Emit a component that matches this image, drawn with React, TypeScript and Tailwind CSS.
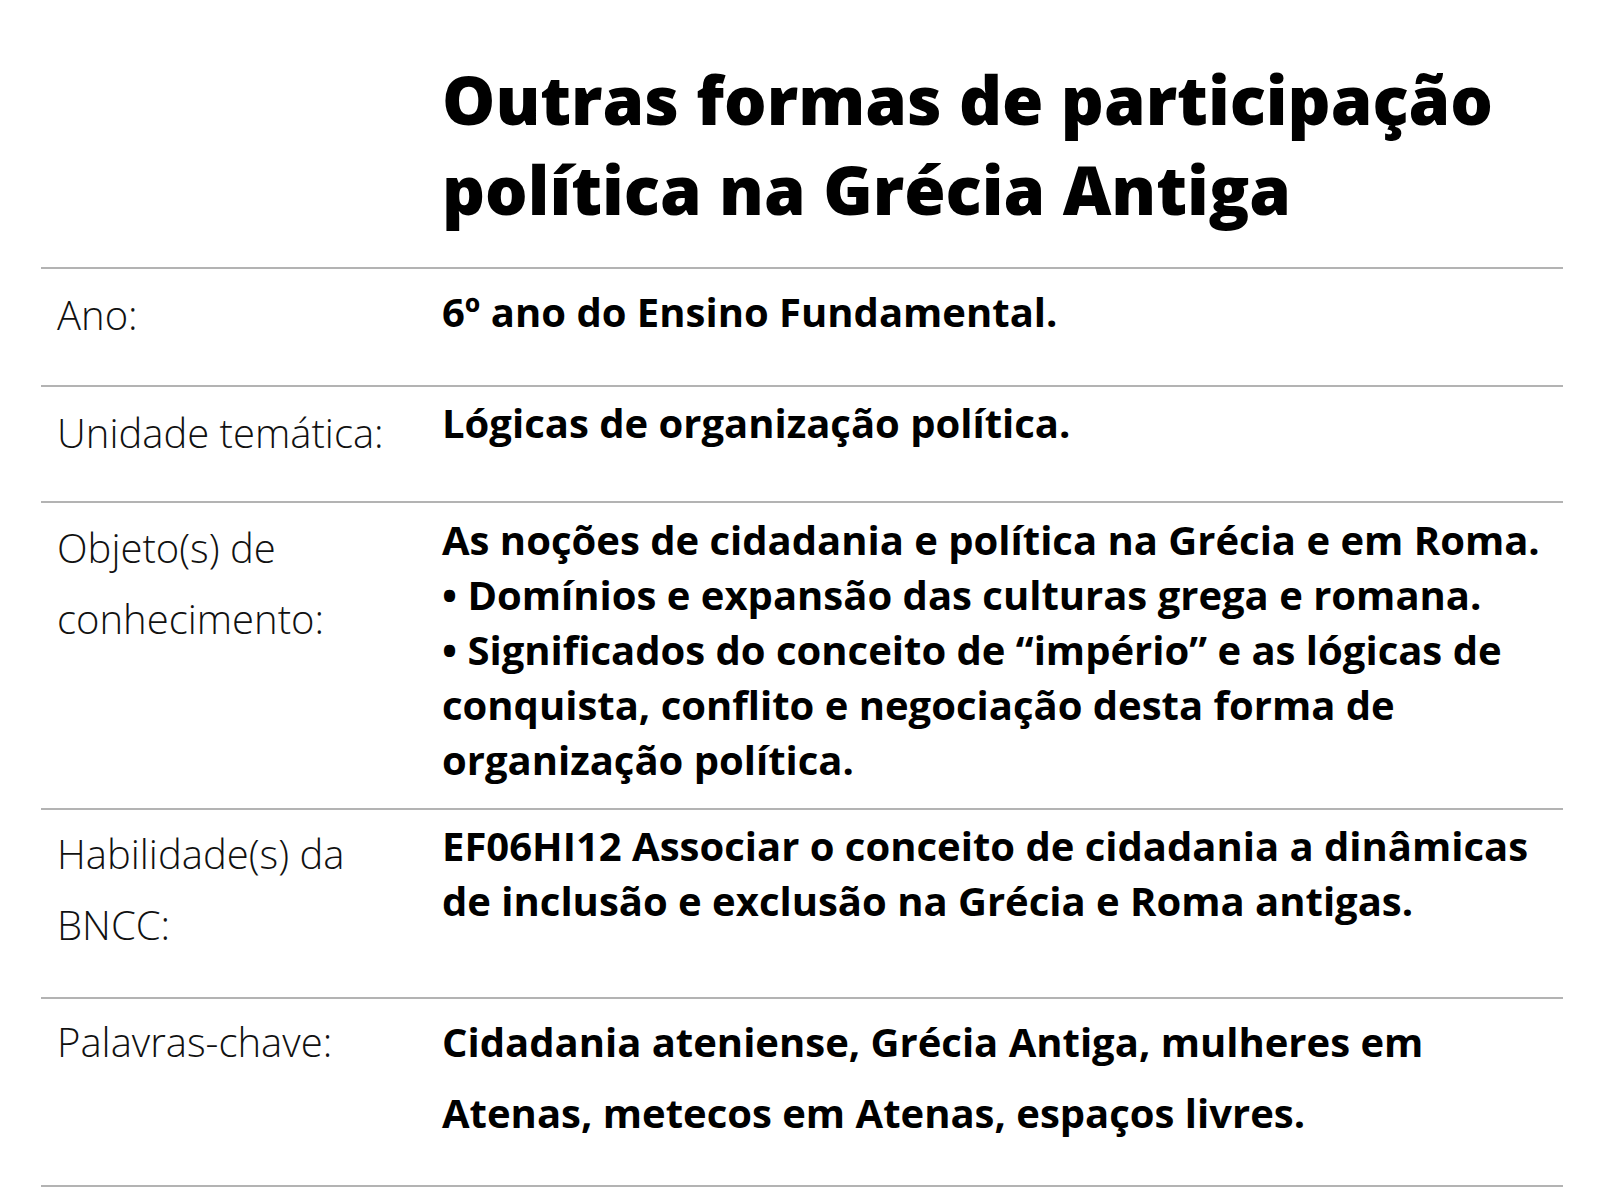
const rows = [
  {
    label: ["Ano:"],
    value: ["6º ano do Ensino Fundamental."],
    h: "h-[118px]",
    pt: "pt-[15px]",
    lpt: "pt-[10px]",
    lh: "leading-[55px]",
  },
  {
    label: ["Unidade temática:"],
    value: ["Lógicas de organização política."],
    h: "h-[116px]",
    pt: "pt-[8px]",
    lpt: "pt-[10px]",
    lh: "leading-[55px]",
  },
  {
    label: ["Objeto(s) de", "conhecimento:"],
    value: [
      "As noções de cidadania e política na Grécia e em Roma.",
      "• Domínios e expansão das culturas grega e romana.",
      "• Significados do conceito de “império” e as lógicas de conquista, conflito e negociação desta forma de organização política.",
    ],
    h: "h-[307px]",
    pt: "pt-[9px]",
    lpt: "pt-[9px]",
    lh: "leading-[55px]",
  },
  {
    label: ["Habilidade(s) da", "BNCC:"],
    value: ["EF06HI12 Associar o conceito de cidadania a dinâmicas de inclusão e exclusão na Grécia e Roma antigas."],
    h: "h-[189px]",
    pt: "pt-[8px]",
    lpt: "pt-[8px]",
    lh: "leading-[55px]",
  },
  {
    label: ["Palavras-chave:"],
    value: ["Cidadania ateniense, Grécia Antiga, mulheres em Atenas, metecos em Atenas, espaços livres."],
    h: "h-[188px]",
    pt: "pt-[7px]",
    lpt: "pt-[7px]",
    lh: "leading-[71px]",
  },
];

export default function App() {
  return (
    <div className="w-[1600px] h-[1200px] bg-white font-['Open_Sans','Liberation_Sans',sans-serif] text-black overflow-hidden">
      <div className="ml-[41px] w-[1522px] pt-[54px]">
        <h1 className="ml-[401px] text-[67px] leading-[90px] font-extrabold">
          Outras formas de participação
          <br />
          política na Grécia Antiga
        </h1>

        <div className="mt-[33px] border-t-2 border-[#b3b3b3]">
          {rows.map((r) => (
            <div key={r.label[0]} className={`flex border-b-2 border-[#b3b3b3] ${r.h}`}>
              <div className={`w-[401px] shrink-0 pl-[16px] text-[40px] leading-[71px] font-light text-[#111] ${r.lpt}`}>
                {r.label.map((l) => (
                  <div key={l}>{l}</div>
                ))}
              </div>
              <div className={`flex-1 pr-[20px] text-[40px] font-bold ${r.pt} ${r.lh}`}>
                {r.value.map((v) => (
                  <div key={v}>{v}</div>
                ))}
              </div>
            </div>
          ))}
        </div>
      </div>
    </div>
  );
}
